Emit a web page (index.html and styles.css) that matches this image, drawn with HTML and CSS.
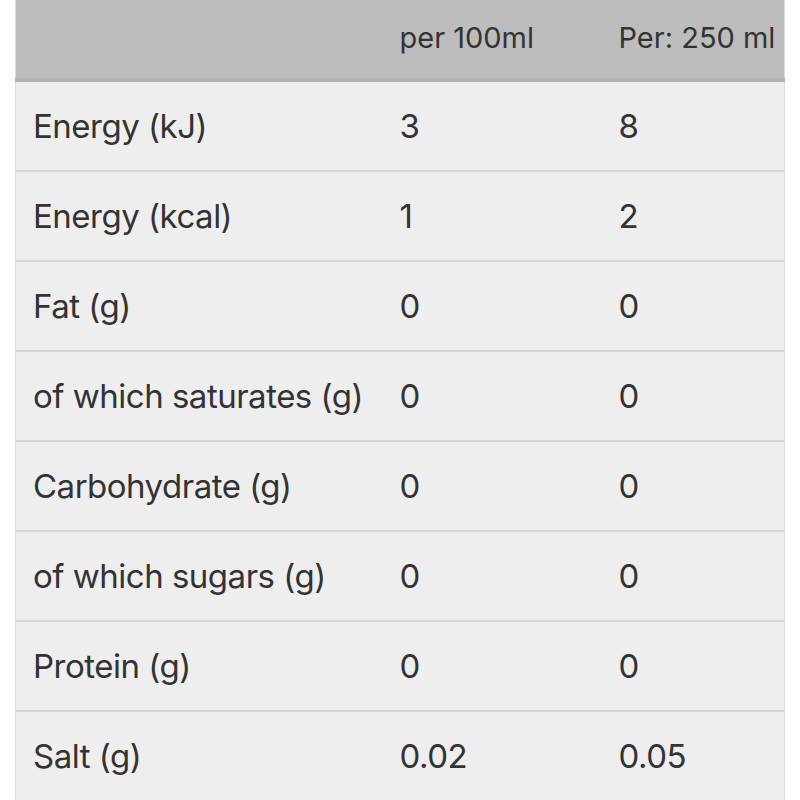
FILE: index.html
```html
<!DOCTYPE html>
<html lang="en">
<head>
<meta charset="utf-8">
<title>Nutrition</title>
<link rel="stylesheet" href="styles.css">
</head>
<body>
<table class="nutrition">
  <colgroup>
    <col class="col-name">
    <col class="col-100">
    <col class="col-serving">
  </colgroup>
  <thead>
    <tr>
      <th class="name"></th>
      <th>per 100ml</th>
      <th>Per: 250 ml</th>
    </tr>
  </thead>
  <tbody>
    <tr><td class="name">Energy (kJ)</td><td>3</td><td>8</td></tr>
    <tr><td class="name">Energy (kcal)</td><td>1</td><td>2</td></tr>
    <tr><td class="name">Fat (g)</td><td>0</td><td>0</td></tr>
    <tr><td class="name">of which saturates (g)</td><td>0</td><td>0</td></tr>
    <tr><td class="name">Carbohydrate (g)</td><td>0</td><td>0</td></tr>
    <tr><td class="name">of which sugars (g)</td><td>0</td><td>0</td></tr>
    <tr><td class="name">Protein (g)</td><td>0</td><td>0</td></tr>
    <tr><td class="name">Salt (g)</td><td>0.02</td><td>0.05</td></tr>
  </tbody>
</table>
</body>
</html>
```
FILE: styles.css
```css
html, body {
  margin: 0;
  padding: 0;
  background: #ffffff;
}

body {
  font-family: Inter, "Noto Sans", "Liberation Sans", sans-serif;
  color: #333333;
}

.nutrition {
  margin-left: 15px;
  width: 770px;
  border-collapse: collapse;
  table-layout: fixed;
  background: #eeeeee;
  border-left: 1px solid #dddddd;
  border-right: 1px solid #dddddd;
}

.col-name { width: 384px; }
.col-100 { width: 219px; }

.nutrition th,
.nutrition td {
  text-align: left;
  vertical-align: middle;
  padding: 0;
  white-space: nowrap;
}

.nutrition th {
  height: 80px;
  background: #bdbdbd;
  border-bottom: 4px solid #b3b3b3;
  font-size: 29px;
  font-weight: 400;
  padding-bottom: 4px;
  box-sizing: border-box;
}

.nutrition td {
  height: 88px;
  border-bottom: 2px solid #d6d6d6;
  font-size: 33px;
  letter-spacing: -0.5px;
}

.nutrition .name {
  padding-left: 17px;
}
```
